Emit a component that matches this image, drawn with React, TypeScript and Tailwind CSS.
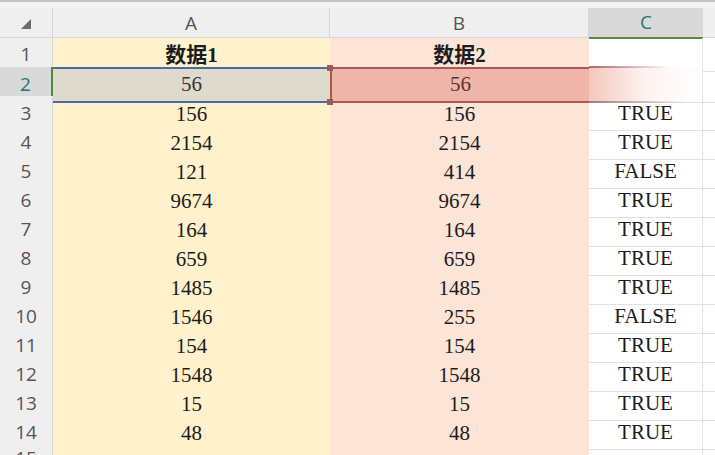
import { useState } from 'react'

const rows: [string, string, string][] = [
  ['156', '156', 'TRUE'],
  ['2154', '2154', 'TRUE'],
  ['121', '414', 'FALSE'],
  ['9674', '9674', 'TRUE'],
  ['164', '164', 'TRUE'],
  ['659', '659', 'TRUE'],
  ['1485', '1485', 'TRUE'],
  ['1546', '255', 'FALSE'],
  ['154', '154', 'TRUE'],
  ['1548', '1548', 'TRUE'],
  ['15', '15', 'TRUE'],
  ['48', '48', 'TRUE'],
]

const serif = "font-['Liberation_Serif','Noto_Sans_CJK_SC',serif]"
const sans = "font-['Open_Sans','Noto_Sans',sans-serif]"
const cols = 'grid grid-cols-[53px_277px_259px_114px_1fr]'

function RowHead({ n, active }: { n: number; active?: boolean }) {
  return (
    <div
      className={`flex items-center justify-center border-b border-r border-[#d6d6d6] text-[19px] ${sans} ${
        active ? 'bg-[#d9d9d9] text-[#1d7a6b] border-r-[2px] border-r-[#4f8a3a]' : 'bg-[#efefef] text-[#555]'
      }`}
    >
      {n}
    </div>
  )
}

export default function App() {
  const [sel] = useState(2)

  return (
    <div className="w-[715px] h-[455px] overflow-hidden bg-white">
      <div className="h-[2px] bg-[#c4c4c4]" />
      <div className="h-[6px] bg-[#f4f4f4]" />

      {/* column headers */}
      <div className={`${cols} h-[30px] bg-[#efefef] border-b border-[#d6d6d6] text-[19px] text-[#555] ${sans}`}>
        <div className="flex items-center justify-center border-r border-[#d6d6d6]">
          <svg width="10" height="10" viewBox="0 0 10 10" className="ml-[-1px] mt-[2px]">
            <polygon points="10,0 10,10 0,10" fill="#6b6b6b" />
          </svg>
        </div>
        <div className="flex items-center justify-center border-r border-[#d6d6d6]">A</div>
        <div className="flex items-center justify-center border-r border-[#d6d6d6]">B</div>
        <div className="flex items-center justify-center bg-[#d9d9d9] text-[#1d7a6b] border-b-2 border-[#5a8a3c] mb-[-1px]">C</div>
        <div />
      </div>

      {/* row 1 */}
      <div className={`${cols} h-[29px] text-[21px] text-[#1c1c1c] ${serif}`}>
        <RowHead n={1} />
        <div className="flex items-center justify-center bg-[#fff2cc] pt-[2px] font-bold">数据1</div>
        <div className="flex items-center justify-center bg-[#fce4d6] pt-[2px] font-bold">数据2</div>
        <div className="border-b border-r border-[#e2e2e2]" />
        <div className="border-b border-[#e2e2e2]" />
      </div>

      {/* row 2 selected */}
      <div className={`${cols} h-[29px] text-[21px] ${serif}`}>
        <RowHead n={2} active={sel === 2} />
        <div className="relative flex items-center justify-center bg-[#dedbcc] border-y-2 border-[#4a6aa6] text-[#333]">
          56
        </div>
        <div className="relative flex items-center justify-center bg-[#efb5a9] border-y-2 border-l-2 border-[#ad5752] text-[#5e3431]">
          56
          <span className="absolute left-[-5px] top-[-4px] w-[6px] h-[6px] bg-[#9c5a5a]" />
          <span className="absolute left-[-5px] bottom-[-4px] w-[6px] h-[6px] bg-[#9c5a5a]" />
        </div>
        <div className="relative bg-gradient-to-r from-[#f3c7bc] via-[#fdf3f0] to-white border-b border-r border-[#e2e2e2]">
          <span className="absolute left-0 top-[-1px] w-[80px] h-[2px] bg-gradient-to-r from-[#b06a66] to-transparent blur-[0.5px]" />
          <span className="absolute left-0 bottom-[-1px] w-[95px] h-[2px] bg-gradient-to-r from-[#9a8080] to-transparent blur-[0.5px]" />
        </div>
        <div className="border-b border-[#e2e2e2]" />
      </div>

      {rows.map((r, i) => (
        <div key={i} className={`${cols} h-[29px] text-[21px] text-[#1c1c1c] ${serif}`}>
          <RowHead n={i + 3} />
          <div className="flex items-center justify-center bg-[#fff2cc] pt-[2px]">{r[0]}</div>
          <div className="flex items-center justify-center bg-[#fce4d6] pt-[2px]">{r[1]}</div>
          <div className="flex items-center justify-center border-b border-r border-[#e2e2e2] pt-[2px]">{r[2]}</div>
          <div className="border-b border-[#e2e2e2]" />
        </div>
      ))}

      <div className={`${cols} h-[29px] text-[21px] ${serif}`}>
        <RowHead n={15} />
        <div className="bg-[#fff2cc]" />
        <div className="bg-[#fce4d6]" />
        <div className="border-r border-[#e2e2e2]" />
        <div />
      </div>
    </div>
  )
}
